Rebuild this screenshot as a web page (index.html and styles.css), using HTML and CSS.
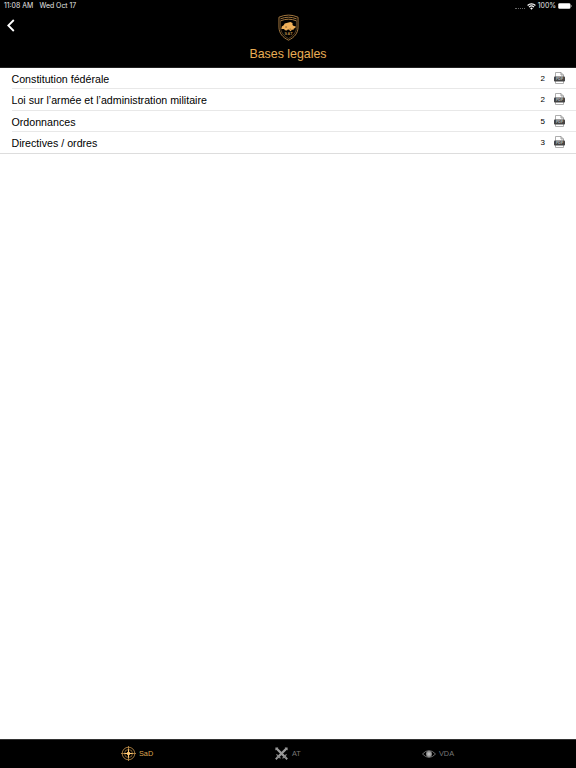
FILE: index.html
```html
<!DOCTYPE html>
<html lang="fr">
<head>
  <meta charset="UTF-8">
  <meta name="viewport" content="width=device-width, initial-scale=1.0">
  <title>Bases legales</title>
  <link rel="stylesheet" href="styles.css">
</head>
<body>

  <header class="header">
    <div class="status">
      <span class="time">11:08 AM</span>
      <span class="date">Wed Oct 17</span>
      <span class="signal"></span>
      <svg class="wifi" width="9" height="7" viewBox="0 0 9 7">
        <path d="M.6 2.5a5.6 5.6 0 0 1 7.8 0M2 4.1a3.6 3.6 0 0 1 5 0" fill="none" stroke="#fff" stroke-width="1.2"/>
        <path d="M3.1 5.2a2 2 0 0 1 2.8 0L4.5 6.7z" fill="#fff"/>
      </svg>
      <span class="percent">100%</span>
      <svg class="battery" width="14" height="6" viewBox="0 0 14 6">
        <rect x=".25" y=".25" width="12.2" height="5.5" rx="1.3" fill="#fff"/>
        <path d="M13.2 2v2" stroke="#aaa" stroke-width=".8"/>
      </svg>
    </div>

    <div class="navbar">
      <svg class="back" width="8" height="13" viewBox="0 0 8 13">
        <path d="M6.8 1 1.3 6.500 6.8 12" fill="none" stroke="#fff" stroke-width="1.8"/>
      </svg>
      <svg class="crest" width="21" height="27" viewBox="0 0 22 28">
        <g fill="none" stroke="#a87b40">
          <path d="M1 3.2Q11-1.2 21 3.2v10.3C21 20 17 24.500 11 27.300 5 24.500 1 20 1 13.500z" stroke-width="1"/>
          <path d="M2.500 5Q11 1.400 19.500 5M2.500 7.100Q11 3.500 19.500 7.100" stroke-width="1"/>
          <path d="M2.700 7v7c0 5 3.300 9 8.300 11.500 5-2.500 8.300-6.500 8.300-11.500V7" stroke-width=".5"/>
        </g>
        <path d="M3.500 15.500l.5-2.500 2-1.300 1-1.800 3-.9 3-.7 2.200 1v2l1.300 1 2 .3-.3 2-1.600.4-.6 1.500-1.500-.4-1 1.700-1.500-.8-1.500-1.200-1.200 1.400-2-.3-1-1.200z" fill="#f0b05a"/>
        <path d="M7.500 13.500h2m2.500 2.200h1.500" stroke="#7a5628" stroke-width=".9"/>
        <text x="11.300" y="21.900" text-anchor="middle" class="crest-label">SAT</text>
      </svg>
    </div>

    <h1 class="title">Bases legales</h1>
  </header>

  <main class="content">
    <ul class="list">
      <li class="row">
        <span class="name">Constitution fédérale</span>
        <span class="count">2</span>
        <svg class="pdf" viewBox="0 0 11 12">
          <path d="M1.500 5V.5H7L9.500 3v2M1.500 9v2.500h8V9" fill="#fff" stroke="#999" stroke-width=".8"/>
          <path d="M7 .5V3h2.500" fill="none" stroke="#777" stroke-width=".7"/>
          <rect y="4.500" width="11" height="5" rx=".8" fill="#444"/>
          <text x="5.500" y="8.300" text-anchor="middle" class="pdf-label">PDF</text>
        </svg>
      </li>
      <li class="row">
        <span class="name">Loi sur l’armée et l’administration militaire</span>
        <span class="count">2</span>
        <svg class="pdf" viewBox="0 0 11 12">
          <path d="M1.500 5V.5H7L9.500 3v2M1.500 9v2.500h8V9" fill="#fff" stroke="#999" stroke-width=".8"/>
          <path d="M7 .5V3h2.500" fill="none" stroke="#777" stroke-width=".7"/>
          <rect y="4.500" width="11" height="5" rx=".8" fill="#444"/>
          <text x="5.500" y="8.300" text-anchor="middle" class="pdf-label">PDF</text>
        </svg>
      </li>
      <li class="row">
        <span class="name">Ordonnances</span>
        <span class="count">5</span>
        <svg class="pdf" viewBox="0 0 11 12">
          <path d="M1.500 5V.5H7L9.500 3v2M1.500 9v2.500h8V9" fill="#fff" stroke="#999" stroke-width=".8"/>
          <path d="M7 .5V3h2.500" fill="none" stroke="#777" stroke-width=".7"/>
          <rect y="4.500" width="11" height="5" rx=".8" fill="#444"/>
          <text x="5.500" y="8.300" text-anchor="middle" class="pdf-label">PDF</text>
        </svg>
      </li>
      <li class="row">
        <span class="name">Directives / ordres</span>
        <span class="count">3</span>
        <svg class="pdf" viewBox="0 0 11 12">
          <path d="M1.500 5V.5H7L9.500 3v2M1.500 9v2.500h8V9" fill="#fff" stroke="#999" stroke-width=".8"/>
          <path d="M7 .5V3h2.500" fill="none" stroke="#777" stroke-width=".7"/>
          <rect y="4.500" width="11" height="5" rx=".8" fill="#444"/>
          <text x="5.500" y="8.300" text-anchor="middle" class="pdf-label">PDF</text>
        </svg>
      </li>
    </ul>
  </main>

  <nav class="tabbar">
    <a class="tab tab-sad active">
      <svg width="15" height="15" viewBox="0 0 15 15">
        <g fill="none" stroke="#c4924a">
          <circle cx="7.500" cy="7.500" r="6.300" stroke-width=".8"/>
          <circle cx="7.500" cy="7.500" r="4" stroke-width=".6"/>
          <path d="M7.500 0v15M0 7.500h15" stroke-width=".8"/>
        </g>
        <circle cx="7.500" cy="7.500" r="1.800" fill="#ffc873"/>
        <path d="M7.500 3.500v8M3.500 7.500h8" stroke="#ffc873" stroke-width="1"/>
      </svg>
      <span class="label">SaD</span>
    </a>
    <a class="tab tab-at">
      <svg width="13" height="13" viewBox="0 0 13 13">
        <path d="M1.500 1.500l9 9M11.500 1.500l-9 9" stroke="#999" stroke-width="2.400"/>
        <path d="M1.500 7.300l4 4M11.500 7.300l-4 4" stroke="#888" stroke-width="1.200"/>
        <path d="M2.600 10.400.8 12.200M10.400 10.400l1.800 1.800" stroke="#999" stroke-width="2"/>
        <path d="M.4.400h3L.4 3.400zM12.600.4h-3l3 3z" fill="#999"/>
      </svg>
      <span class="label">AT</span>
    </a>
    <a class="tab tab-vda">
      <svg width="14" height="8" viewBox="0 0 14 8">
        <path d="M.5 4Q3.500.6 7 .6T13.500 4Q10.500 7.400 7 7.400T.5 4z" fill="none" stroke="#777" stroke-width=".9"/>
        <circle cx="7" cy="4" r="2.900" fill="#999"/>
        <circle cx="7" cy="4" r="1.500" fill="#bbb"/>
      </svg>
      <span class="label">VDA</span>
    </a>
  </nav>

</body>
</html>
```
FILE: styles.css
```css
* {
  box-sizing: border-box;
}

body {
  display: flex;
  flex-direction: column;
  height: 100vh;
  margin: 0;
  background-color: #fff;
  color: #000;
  font-family: "Liberation Sans", Arial, sans-serif;
}

svg {
  display: block;
  flex: none;
}

/* header */
.header {
  height: 68px;
  background-color: #000;
  border-bottom: 1px solid #222;
}

.status {
  display: flex;
  align-items: center;
  height: 12px;
  padding: 0 3px 0 4px;
  color: #e6e6e6;
  font-family: Inter, sans-serif;
  font-size: 6.9px;
  line-height: 12px;
  white-space: nowrap;
}

.time {
  width: 35.5px;
}

.signal {
  width: 10px;
  margin: 5px 2px 0 auto;
  border-bottom: 1px dotted #666;
}

.percent {
  margin: 0 2px;
}

.battery {
  margin-right: 1px;
}

.navbar {
  display: grid;
  grid-template-columns: 1fr 21px 1fr;
  height: 30px;
  padding: 2px 7px 0;
}

.back {
  margin-top: 5px;
}

.title {
  margin: 4px 0 0;
  color: #e9ad55;
  font-size: 12.4px;
  font-weight: normal;
  line-height: 16px;
  text-align: center;
}

.crest-label {
  fill: #b58443;
  font-size: 4px;
  font-weight: bold;
  letter-spacing: 0.5px;
}

/* list */
.content {
  flex: 1;
}

.list {
  margin: 0;
  padding: 0 0 0 11.5px;
  border-bottom: 1px solid #ddd;
  list-style: none;
}

.row {
  display: flex;
  align-items: center;
  height: 21.33px;
  padding: 0 11px 0 0;
  border-bottom: 1px solid #e8e8e8;
  font-size: 10.67px;
}

.row:last-child {
  padding-bottom: 1px;
  border-bottom: 0;
}

.name {
  flex: 1;
  padding-top: 2px;
}

.count {
  margin-right: 9px;
  padding-top: 1px;
  font-size: 8px;
}

.pdf {
  width: 11px;
  height: 12px;
}

.pdf-label {
  fill: #bbb;
  font-size: 3.6px;
  font-weight: bold;
}

/* tab bar */
.tabbar {
  display: flex;
  height: 29px;
  background-color: #000;
  border-top: 1px solid #333;
}

.tab {
  display: flex;
  align-items: center;
  padding-bottom: 1px;
  color: #777;
  font-size: 7.3px;
}

.label {
  margin-left: 3px;
}

.tab-sad {
  width: 154px;
  margin-left: 121px;
}

.tab-at {
  width: 147px;
}

.tab-at .label {
  margin-left: 4px;
}

.active {
  color: #dda550;
}
```
